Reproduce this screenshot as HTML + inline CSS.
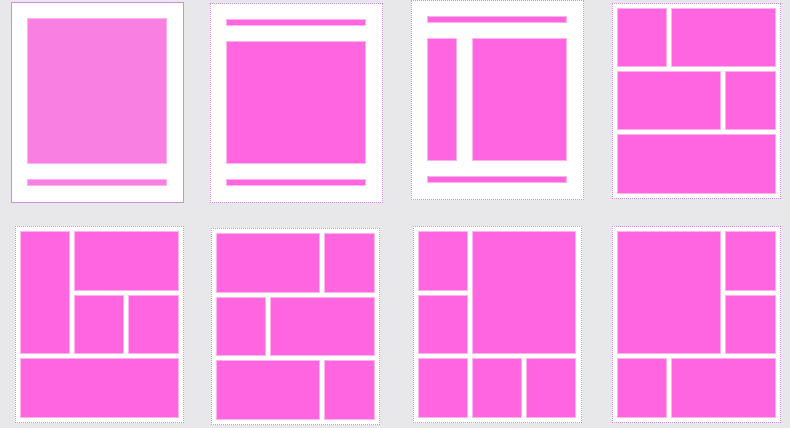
<!DOCTYPE html>
<html><head><style>
body{margin:0;width:790px;height:428px;background:#e8e8ea;position:relative;overflow:hidden}
.c{position:absolute;background:#fff;border:1px dotted #d68af0;box-sizing:border-box}
.r{position:absolute;background:#ff66e0;box-shadow:0 0 0 1px #ffb3ee}
</style></head><body>
<div class="c" style="left:11px;top:2px;width:173px;height:201px;border:1px solid #c98ee0"></div>
<div class="r" style="left:28px;top:19px;width:138px;height:144px;background:#f980e2"></div>
<div class="r" style="left:28px;top:180px;width:138px;height:5px;background:#f980e2"></div>

<div class="c" style="left:210px;top:3px;width:173px;height:200px"></div>
<div class="r" style="left:227px;top:20px;width:138px;height:5px"></div>
<div class="r" style="left:227px;top:42px;width:138px;height:121px"></div>
<div class="r" style="left:227px;top:180px;width:138px;height:5px"></div>

<div class="c" style="left:411px;top:0px;width:173px;height:200px"></div>
<div class="r" style="left:428px;top:17px;width:138px;height:5px"></div>
<div class="r" style="left:428px;top:39px;width:28px;height:121px"></div>
<div class="r" style="left:473px;top:39px;width:93px;height:121px"></div>
<div class="r" style="left:428px;top:177px;width:138px;height:5px"></div>

<div class="c" style="left:612px;top:3px;width:169px;height:196px"></div>
<div class="r" style="left:618px;top:9px;width:48px;height:57px"></div>
<div class="r" style="left:672px;top:9px;width:103px;height:57px"></div>
<div class="r" style="left:618px;top:72px;width:102px;height:57px"></div>
<div class="r" style="left:726px;top:72px;width:49px;height:57px"></div>
<div class="r" style="left:618px;top:135px;width:157px;height:58px"></div>

<div class="c" style="left:15px;top:226px;width:169px;height:197px"></div>
<div class="r" style="left:21px;top:232px;width:48px;height:121px"></div>
<div class="r" style="left:75px;top:232px;width:103px;height:58px"></div>
<div class="r" style="left:75px;top:296px;width:48px;height:57px"></div>
<div class="r" style="left:129px;top:296px;width:49px;height:57px"></div>
<div class="r" style="left:21px;top:359px;width:157px;height:58px"></div>

<div class="c" style="left:211px;top:228px;width:169px;height:197px"></div>
<div class="r" style="left:217px;top:234px;width:102px;height:58px"></div>
<div class="r" style="left:325px;top:234px;width:49px;height:58px"></div>
<div class="r" style="left:217px;top:298px;width:48px;height:57px"></div>
<div class="r" style="left:271px;top:298px;width:103px;height:57px"></div>
<div class="r" style="left:217px;top:361px;width:102px;height:58px"></div>
<div class="r" style="left:325px;top:361px;width:49px;height:58px"></div>

<div class="c" style="left:413px;top:226px;width:169px;height:197px"></div>
<div class="r" style="left:419px;top:232px;width:48px;height:58px"></div>
<div class="r" style="left:419px;top:296px;width:48px;height:57px"></div>
<div class="r" style="left:473px;top:232px;width:102px;height:121px"></div>
<div class="r" style="left:419px;top:359px;width:48px;height:58px"></div>
<div class="r" style="left:473px;top:359px;width:48px;height:58px"></div>
<div class="r" style="left:527px;top:359px;width:48px;height:58px"></div>

<div class="c" style="left:612px;top:226px;width:169px;height:197px"></div>
<div class="r" style="left:618px;top:232px;width:102px;height:121px"></div>
<div class="r" style="left:726px;top:232px;width:49px;height:58px"></div>
<div class="r" style="left:726px;top:296px;width:49px;height:57px"></div>
<div class="r" style="left:618px;top:359px;width:48px;height:58px"></div>
<div class="r" style="left:672px;top:359px;width:103px;height:58px"></div>
</body></html>
